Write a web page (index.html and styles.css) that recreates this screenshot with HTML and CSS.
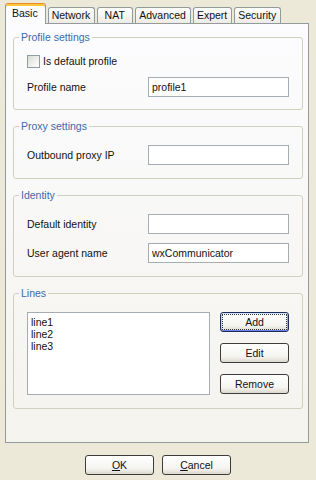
FILE: index.html
```html
<!DOCTYPE html>
<html lang="en">
<head>
    <meta charset="UTF-8">
    <meta name="viewport" content="width=device-width, initial-scale=1.0">
    <title>Profile</title>
    <link rel="stylesheet" href="styles.css">
</head>
<body>
    <div class="dialog">
        <div class="tabs">
            <div class="tab active">Basic</div>
            <div class="tab">Network</div>
            <div class="tab">NAT</div>
            <div class="tab">Advanced</div>
            <div class="tab">Expert</div>
            <div class="tab">Security</div>
        </div>

        <div class="panel">
            <fieldset class="group profile">
                <legend>Profile settings</legend>
                <label class="check"><span class="box"></span>Is default profile</label>
                <div class="row">
                    <span class="label">Profile name</span>
                    <input class="field" type="text" value="profile1">
                </div>
            </fieldset>

            <fieldset class="group">
                <legend>Proxy settings</legend>
                <div class="row">
                    <span class="label">Outbound proxy IP</span>
                    <input class="field" type="text" value="">
                </div>
            </fieldset>

            <fieldset class="group">
                <legend>Identity</legend>
                <div class="row">
                    <span class="label">Default identity</span>
                    <input class="field" type="text" value="">
                </div>
                <div class="row">
                    <span class="label">User agent name</span>
                    <input class="field" type="text" value="wxCommunicator">
                </div>
            </fieldset>

            <fieldset class="group">
                <legend>Lines</legend>
                <div class="lines">
                    <div class="list">
                        <div>line1</div>
                        <div>line2</div>
                        <div>line3</div>
                    </div>
                    <div class="side">
                        <button class="btn focus">Add</button>
                        <button class="btn">Edit</button>
                        <button class="btn">Remove</button>
                    </div>
                </div>
            </fieldset>
        </div>

        <div class="actions">
            <button class="btn"><u>O</u>K</button>
            <button class="btn"><u>C</u>ancel</button>
        </div>
    </div>
</body>
</html>
```

FILE: styles.css
```css
body {
    margin: 0;
    background: #ece9d8;
    font-family: "Liberation Sans", Arial, sans-serif;
    font-size: 10.5px;
    color: #000;
}
.dialog {
    padding: 3px 0 0 5px;
}

/* tab strip */
.tabs {
    display: flex;
    align-items: flex-end;
    gap: 2px;
    height: 21px;
    margin-bottom: -1px;
    position: relative;
    z-index: 1;
}
.tab {
    box-sizing: border-box;
    min-width: 36px;
    height: 16px;
    line-height: 15px;
    margin-bottom: 1px;
    padding: 0 4px 0 3px;
    border: 1px solid #919b9c;
    border-bottom: none;
    border-radius: 3px 3px 0 0;
    background: linear-gradient(#ffffff, #ecebe5);
    text-align: center;
    color: #111;
}
.tab.active {
    height: 21px;
    line-height: 19px;
    margin-bottom: 0;
    padding: 0 7px 0 6px;
    border-top: 1px solid #e68b2c;
    box-shadow: inset 0 2px 0 #ffc73c;
    background: #fcfcfe;
}

/* page */
.panel {
    box-sizing: border-box;
    width: 304px;
    height: 420px;
    padding: 7px 5px 0 7px;
    border: 1px solid #919b9c;
    background: linear-gradient(#fcfcfe, #f4f3ee);
}
.group {
    margin: 0 0 10px 0;
    padding: 13px 13px 13px 13px;
    border: 1px solid #d0d0bf;
    border-radius: 3px;
    min-width: 0;
}
.group.profile {
    padding-top: 8px;
    padding-bottom: 12px;
}
.group legend {
    margin-left: -8px;
    padding: 0 2px;
    line-height: 12px;
    color: #3c69a8;
}
.row {
    display: flex;
    align-items: center;
    height: 20px;
    color: #111;
}
.row + .row {
    margin-top: 9px;
}
.check + .row {
    margin-top: 6px;
}
.label {
    width: 121px;
}
.field {
    box-sizing: border-box;
    width: 141px;
    height: 20px;
    margin: 0;
    padding: 0 3px;
    border: 1px solid #a5acb2;
    background: #fff;
    font: inherit;
    color: #111;
}
.check {
    display: flex;
    align-items: center;
    height: 20px;
    color: #111;
}
.box {
    box-sizing: border-box;
    width: 13px;
    height: 13px;
    margin-right: 3px;
    border: 1px solid #8f9ca6;
    background: linear-gradient(135deg, #dcdcd5, #ffffff);
}

/* lines box */
.lines {
    display: flex;
    gap: 10px;
}
.list {
    box-sizing: border-box;
    width: 183px;
    height: 83px;
    padding: 3px 3px;
    border: 1px solid #a5acb2;
    background: #fff;
    line-height: 12px;
    color: #111;
}
.side {
    display: flex;
    flex-direction: column;
    gap: 11px;
}

/* buttons */
.btn {
    box-sizing: border-box;
    width: 69px;
    height: 20px;
    margin: 0;
    padding: 0;
    border: 1px solid #3c3c3c;
    border-radius: 3px;
    background: linear-gradient(#ffffff, #f4f4f0 70%, #dcd8cc);
    font: inherit;
    color: #111;
}
.btn u {
    text-decoration: underline;
}
.btn.focus {
    border-color: #1f2b5c;
    box-shadow: inset 0 1px 0 #cee7ff, inset 0 -1px 0 #6982ee, inset 1px 0 0 #b8d2f6, inset -1px 0 0 #89adf2;
    outline: 1px dotted #333;
    outline-offset: -3px;
}
.actions {
    display: flex;
    justify-content: center;
    gap: 8px;
    width: 306px;
    margin-top: 12px;
}
```
